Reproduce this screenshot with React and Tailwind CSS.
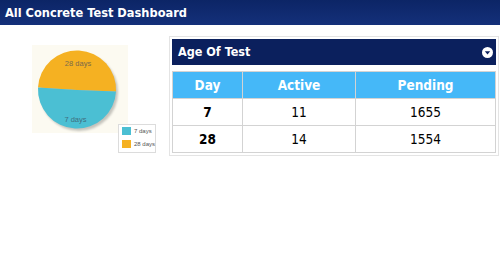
export default function App() {
  const rows = [
    { day: "7", active: "11", pending: "1655" },
    { day: "28", active: "14", pending: "1554" },
  ];

  return (
    <div className="w-[500px] h-[260px] bg-white font-['DejaVu_Sans_Condensed','DejaVu_Sans',sans-serif] overflow-hidden">
      <div className="h-[25px] bg-gradient-to-b from-[#0c2566] to-[#14307a] flex items-center pl-[5px] text-white font-bold text-[12.7px]">
        All Concrete Test Dashboard
      </div>
      <div className="flex">
        {/* pie chart */}
        <div className="w-[169px] relative">
          <div className="ml-[32px] mt-[20px] w-[96px] h-[88px] bg-[#fcfaf1]">
            <svg width="96" height="90" viewBox="0 0 96 90">
              <defs>
                <filter id="sh" x="-20%" y="-20%" width="140%" height="140%">
                  <feGaussianBlur stdDeviation="1.2" />
                </filter>
              </defs>
              <circle cx="47" cy="47" r="39" fill="rgba(0,0,0,0.22)" filter="url(#sh)" />
              <path d="M45 45 L6 42.5 A39 39 0 0 1 84 46.5 Z" fill="#f5b122" />
              <path d="M45 45 L84 46.5 A39 39 0 0 1 6 42.5 Z" fill="#4bbfd3" />
              <text x="46" y="20.5" fontSize="7.5" textAnchor="middle" fill="#7a6a4a" fontFamily="Liberation Sans, sans-serif">
                28 days
              </text>
              <text x="43.5" y="76.5" fontSize="7.5" textAnchor="middle" fill="#3f6f80" fontFamily="Liberation Sans, sans-serif">
                7 days
              </text>
            </svg>
          </div>
          <div className="absolute left-[118px] top-[99px] w-[38px] h-[29px] bg-white border border-[#dcdcdc] pl-[3px] pt-[2px] flex flex-col gap-[5px] font-['Liberation_Sans',sans-serif] text-[6px] leading-[8px] text-[#555] whitespace-nowrap">
            <div className="flex items-center gap-[3px]">
              <span className="w-[9px] h-[8px] shrink-0 bg-[#4bbfd3]" />
              7 days
            </div>
            <div className="flex items-center gap-[3px]">
              <span className="w-[9px] h-[8px] shrink-0 bg-[#f5b122]" />
              28 days
            </div>
          </div>
        </div>

        {/* age of test panel */}
        <div className="mt-[11px] w-[330px] border border-[#e4e4e4] p-[2px]">
          <div className="h-[26px] bg-[#0b205d] flex items-center justify-between pl-[6px] pr-[3px] text-white font-bold text-[12.5px]">
            Age Of Test
            <svg width="11" height="11" viewBox="0 0 11 11">
              <circle cx="5.5" cy="5.5" r="5.5" fill="#fff" />
              <path d="M2.8 4.2 H8.2 L5.5 7.4 Z" fill="#0b205d" />
            </svg>
          </div>
          <table className="mt-[6px] w-[324px] border-collapse text-[13.5px] text-center">
            <thead>
              <tr className="h-[27px] bg-[#45b8f8] text-white font-bold">
                <th className="w-[70px] border border-[#d3d3d3]">Day</th>
                <th className="w-[113px] border border-[#d3d3d3]">Active</th>
                <th className="border border-[#d3d3d3]">Pending</th>
              </tr>
            </thead>
            <tbody>
              {rows.map((r) => (
                <tr key={r.day} className="h-[27px] text-black">
                  <td className="border border-[#d3d3d3] font-bold">{r.day}</td>
                  <td className="border border-[#d3d3d3]">{r.active}</td>
                  <td className="border border-[#d3d3d3]">{r.pending}</td>
                </tr>
              ))}
            </tbody>
          </table>
        </div>
      </div>
    </div>
  );
}
